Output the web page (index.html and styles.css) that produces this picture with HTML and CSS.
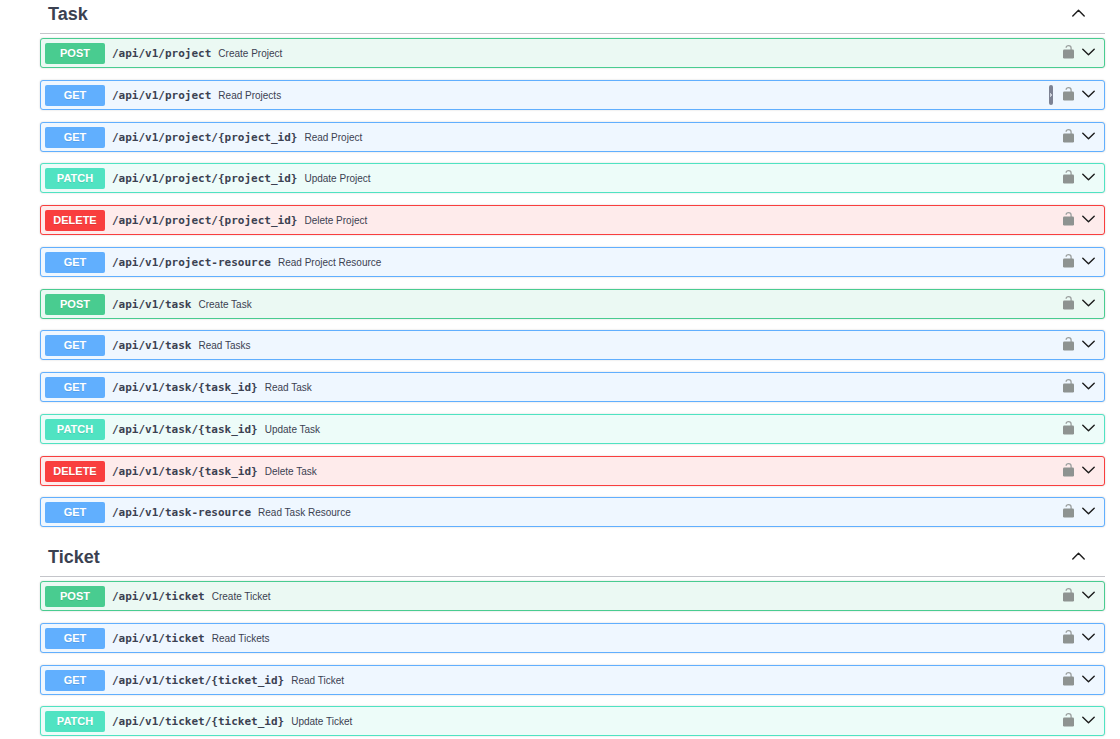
FILE: index.html
```
<!DOCTYPE html>
<html lang="en">
<head>
<meta charset="utf-8">
<title>API operations</title>
<link rel="stylesheet" href="styles.css">
</head>
<body>
<main class="page" id="page"></main>
<script src="app.js"></script>
</body>
</html>
```
FILE: styles.css
```
* { box-sizing: border-box; }
body { margin: 0; background: #fff; color: #3b4151; font-family: "Liberation Sans", Arial, sans-serif; }
button { margin: 0; padding: 0; border: 0; background: none; color: inherit; font: inherit; cursor: pointer; }
svg { display: block; }
.page { display: flex; flex-direction: column; gap: 4px; padding: 0 15px 0 40px; }
.tag-header { display: flex; align-items: flex-start; justify-content: space-between; padding: 3px 20px 8px 8px; margin-bottom: 4px; border-bottom: 1px solid #c4c5ca; }
.tag-title { margin: 0; font-size: 18px; line-height: 22px; font-weight: bold; }
.tag-toggle { padding-top: 6px; }
.chevron { width: 13px; height: 8px; fill: none; stroke: #1c1c1c; stroke-width: 1.4; stroke-linecap: round; stroke-linejoin: round; }
.operations { margin: 0; padding: 0; list-style: none; }
.operation { display: flex; align-items: flex-start; margin-bottom: 12px; padding: 4px 9px 3px 4px; border: 1px solid; border-radius: 3px; box-shadow: 0 0 2px rgba(0, 0, 0, .19); }
.operation:nth-child(4n+3) { margin-bottom: 11px; }
.summary { display: flex; flex: 1; align-items: center; text-align: left; }
.method { width: 60px; border-radius: 2px; color: #fff; font-size: 11px; line-height: 21px; font-weight: bold; text-align: center; text-shadow: 0 1px 0 rgba(0, 0, 0, .1); }
.path { margin-left: 7px; font-family: "DejaVu Sans Mono", monospace; font-size: 11px; line-height: 21px; font-weight: bold; }
.description { margin-left: 7px; font-size: 10px; line-height: 21px; }
.copy { display: grid; place-items: center; width: 4px; height: 20px; margin-right: 10px; border-radius: 2px; background: #7d8293; }
.copy svg { width: 4px; height: 4px; fill: #c9ced8; }
.lock { padding: 2px 0 0; margin-right: 8px; }
.lock svg { width: 11px; height: 14px; }
.expand { padding-top: 5px; }
.post { border-color: #49cc90; background: #ebf9f3; }
.post .method { background: #49cc90; }
.get { border-color: #61affe; background: #eff7ff; }
.get .method { background: #61affe; }
.patch { border-color: #50e3c2; background: #edfcf9; }
.patch .method { background: #50e3c2; }
.delete { border-color: #f93e3e; background: #feebeb; }
.delete .method { background: #f93e3e; }
```
FILE: app.js
```
const tags = [
  { name: "Task", operations: [
    ["post", "/api/v1/project", "Create Project"],
    ["get", "/api/v1/project", "Read Projects", true],
    ["get", "/api/v1/project/{project_id}", "Read Project"],
    ["patch", "/api/v1/project/{project_id}", "Update Project"],
    ["delete", "/api/v1/project/{project_id}", "Delete Project"],
    ["get", "/api/v1/project-resource", "Read Project Resource"],
    ["post", "/api/v1/task", "Create Task"],
    ["get", "/api/v1/task", "Read Tasks"],
    ["get", "/api/v1/task/{task_id}", "Read Task"],
    ["patch", "/api/v1/task/{task_id}", "Update Task"],
    ["delete", "/api/v1/task/{task_id}", "Delete Task"],
    ["get", "/api/v1/task-resource", "Read Task Resource"]
  ] },
  { name: "Ticket", operations: [
    ["post", "/api/v1/ticket", "Create Ticket"],
    ["get", "/api/v1/ticket", "Read Tickets"],
    ["get", "/api/v1/ticket/{ticket_id}", "Read Ticket"],
    ["patch", "/api/v1/ticket/{ticket_id}", "Update Ticket"]
  ] }
];

const up = '<svg class="chevron" viewBox="0 0 13 8"><path d="M.8 7 6.5 1.2 12.2 7"/></svg>';
const down = '<svg class="chevron" viewBox="0 0 13 8"><path d="M.8 1.2 6.5 6.8 12.2 1.2"/></svg>';
const lock = '<svg viewBox="0 0 11 14"><path d="M3.1 2.8C3.2 1.3 4 .7 5.6.7c1.8 0 2.5.9 2.5 2.4V5" fill="none" stroke="#9ba09f" stroke-width="1.3"/><rect y="4.6" width="11" height="8.8" rx="1.2" fill="#8e9391"/></svg>';
const copy = '<button class="copy" aria-label="Copy path"><svg viewBox="0 0 4 4"><path d="M1 0h1v1h1v2H2v1H1z"/></svg></button>';

function operation([method, path, description, copyable]) {
  return `<li class="operation ${method}">
    <button class="summary"><span class="method">${method.toUpperCase()}</span><span class="path">${path}</span><span class="description">${description}</span></button>
    ${copyable ? copy : ""}
    <button class="lock" aria-label="Authorize">${lock}</button>
    <button class="expand" aria-label="Expand ${description}">${down}</button>
  </li>`;
}

document.getElementById("page").innerHTML = tags.map(tag => `<section>
  <header class="tag-header"><h2 class="tag-title">${tag.name}</h2><button class="tag-toggle" aria-label="Collapse ${tag.name}">${up}</button></header>
  <ul class="operations">${tag.operations.map(operation).join("")}</ul>
</section>`).join("");
```
